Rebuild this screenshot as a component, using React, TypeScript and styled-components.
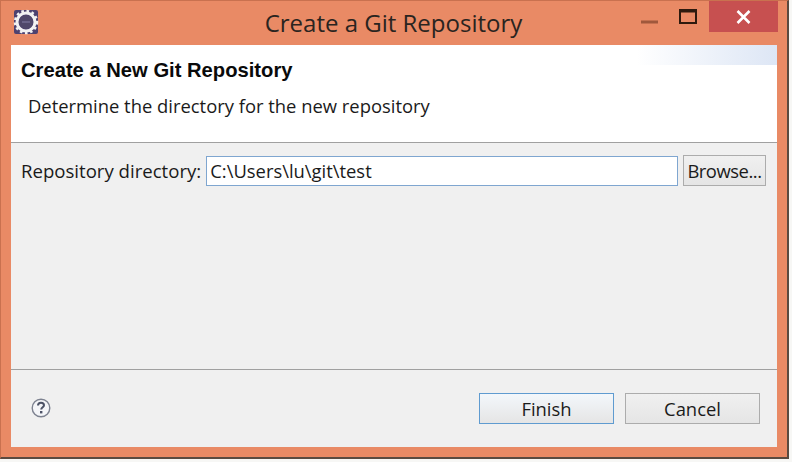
import * as React from 'react'
import styled, { createGlobalStyle } from 'styled-components'

const GlobalStyle = createGlobalStyle`
  html, body {
    margin: 0;
    padding: 0;
    background: #f7f7f5;
  }
`

const Page = styled.div`
  width: 792px;
  height: 462px;
  overflow: hidden;
  font-family: "Open Sans", "Noto Sans", sans-serif;
  color: #1a1a1a;
`

const Frame = styled.div`
  box-sizing: border-box;
  width: 789px;
  height: 459px;
  display: flex;
  flex-direction: column;
  background: #e98a65;
  border: 1px solid #c9714f;
  border-right: 2px solid #5a4a40;
  border-bottom: 2px solid #5a4a40;
  padding: 0 10px 10px 10px;
`

const TitleBar = styled.div`
  height: 44px;
  flex: none;
  position: relative;
  margin-right: -1px;
  display: flex;
  align-items: flex-start;
  justify-content: flex-end;
`

const AppIcon = styled.svg`
  position: absolute;
  left: 2px;
  top: 8px;
`

const Title = styled.div`
  position: absolute;
  left: 0;
  right: 2px;
  top: 6px;
  text-align: center;
  font-size: 24px;
  line-height: 32px;
  color: #2a2420;
`

const WindowButton = styled.div<{ $width: number; $close?: boolean }>`
  width: ${p => p.$width}px;
  height: 31px;
  display: flex;
  align-items: center;
  justify-content: center;
  position: relative;
  background: ${p => (p.$close ? '#c75050' : 'transparent')};
`

const Panel = styled.div`
  flex: 1;
  min-height: 0;
  display: flex;
  flex-direction: column;
  background: #f0f0f0;
`

const Banner = styled.div`
  height: 98px;
  flex: none;
  box-sizing: border-box;
  padding: 12px 0 0 10px;
  background:
    linear-gradient(to right, rgba(255, 255, 255, 1) 0, rgba(221, 230, 245, 1) 100%) right top / 140px 20px no-repeat,
    #ffffff;
  border-bottom: 1px solid #a0a0a0;
`

const Heading = styled.div`
  font-family: "Liberation Sans", Arial, sans-serif;
  font-weight: 700;
  font-size: 20.2px;
  line-height: 26px;
  color: #0a0a0a;
`

const Description = styled.div`
  margin: 10px 0 0 7px;
  font-size: 18.4px;
  line-height: 26px;
`

const Form = styled.div`
  flex: 1;
  display: flex;
  align-items: flex-start;
  gap: 5px;
  padding: 12px 11px 0 10px;
`

const FieldLabel = styled.div`
  font-size: 18.6px;
  line-height: 30px;
  margin-top: 1px;
  white-space: nowrap;
`

const PathInput = styled.div`
  flex: 1;
  box-sizing: border-box;
  height: 30px;
  margin-top: 1px;
  padding-left: 3px;
  background: #ffffff;
  border: 1px solid #7fa6d0;
  font-size: 18.4px;
  line-height: 28px;
`

const Button = styled.div<{ $width: number; $focused?: boolean; $tight?: boolean }>`
  box-sizing: border-box;
  width: ${p => p.$width}px;
  height: 31px;
  display: flex;
  align-items: center;
  justify-content: center;
  font-size: 18.4px;
  letter-spacing: ${p => (p.$tight ? '-0.45px' : '0')};
  background: linear-gradient(to bottom, ${p => (p.$focused ? '#f3f7fb' : '#f0f0f0')}, #e5e5e5);
  border: 1px solid ${p => (p.$focused ? '#5f9bd0' : '#acacac')};
`

const Footer = styled.div`
  height: 78px;
  flex: none;
  box-sizing: border-box;
  border-top: 1px solid #a0a0a0;
  display: flex;
  align-items: flex-start;
  padding: 23px 17px 0 20px;
  gap: 11px;
`

const HelpIcon = styled.svg`
  margin: 5px auto 0 0;
`

export default function App() {
  return (
    <Page>
      <GlobalStyle />
      <Frame>
        <TitleBar>
          <AppIcon width="26" height="26" viewBox="0 0 26 26">
            <rect x="1" y="1" width="24" height="24" rx="2" fill="#4d4270" />
            <circle cx="13" cy="13" r="9" fill="none" stroke="#f2f2f2" strokeWidth="3" />
            <circle cx="13" cy="13" r="11" fill="none" stroke="#f2f2f2" strokeWidth="2.5" strokeDasharray="2.6 2.6" />
            <circle cx="13" cy="13" r="7" fill="#50486a" />
            <rect x="9" y="12" width="8" height="2" fill="#6a6388" />
          </AppIcon>
          <Title>Create a Git Repository</Title>
          <WindowButton $width={34}>
            <svg width="17" height="31" viewBox="0 0 17 31">
              <rect width="17" height="3" y="19.5" fill="#a0583c" />
            </svg>
          </WindowButton>
          <WindowButton $width={43}>
            <svg width="18" height="15" viewBox="0 0 18 15">
              <rect x="1" y="1" width="16" height="13" fill="none" stroke="#2e1a0e" strokeWidth="2" />
              <rect x="1" y="1" width="16" height="2.5" fill="#2e1a0e" />
            </svg>
          </WindowButton>
          <WindowButton $width={69} $close>
            <svg width="15" height="14" viewBox="0 0 15 14">
              <path d="M1.5 1 L13.5 13 M13.5 1 L1.5 13" stroke="#ffffff" strokeWidth="2.6" fill="none" />
            </svg>
          </WindowButton>
        </TitleBar>
        <Panel>
          <Banner>
            <Heading>Create a New Git Repository</Heading>
            <Description>Determine the directory for the new repository</Description>
          </Banner>
          <Form>
            <FieldLabel>Repository directory:</FieldLabel>
            <PathInput>C:\Users\lu\git\test</PathInput>
            <Button $width={83} $tight>Browse...</Button>
          </Form>
          <Footer>
            <HelpIcon width="20" height="20" viewBox="0 0 20 20">
              <circle cx="10" cy="10" r="8.8" fill="#f4f5f8" stroke="#7d8290" strokeWidth="1.4" />
              <path d="M7 7.6 C7 5.6 8.4 4.8 10 4.8 C11.8 4.8 13 5.8 13 7.3 C13 9.2 10.2 9.4 10.2 11.6" fill="none" stroke="#4c5266" strokeWidth="2" />
              <rect x="9" y="13" width="2.4" height="2.4" fill="#4c5266" />
            </HelpIcon>
            <Button $width={135} $focused>Finish</Button>
            <Button $width={135}>Cancel</Button>
          </Footer>
        </Panel>
      </Frame>
    </Page>
  )
}
